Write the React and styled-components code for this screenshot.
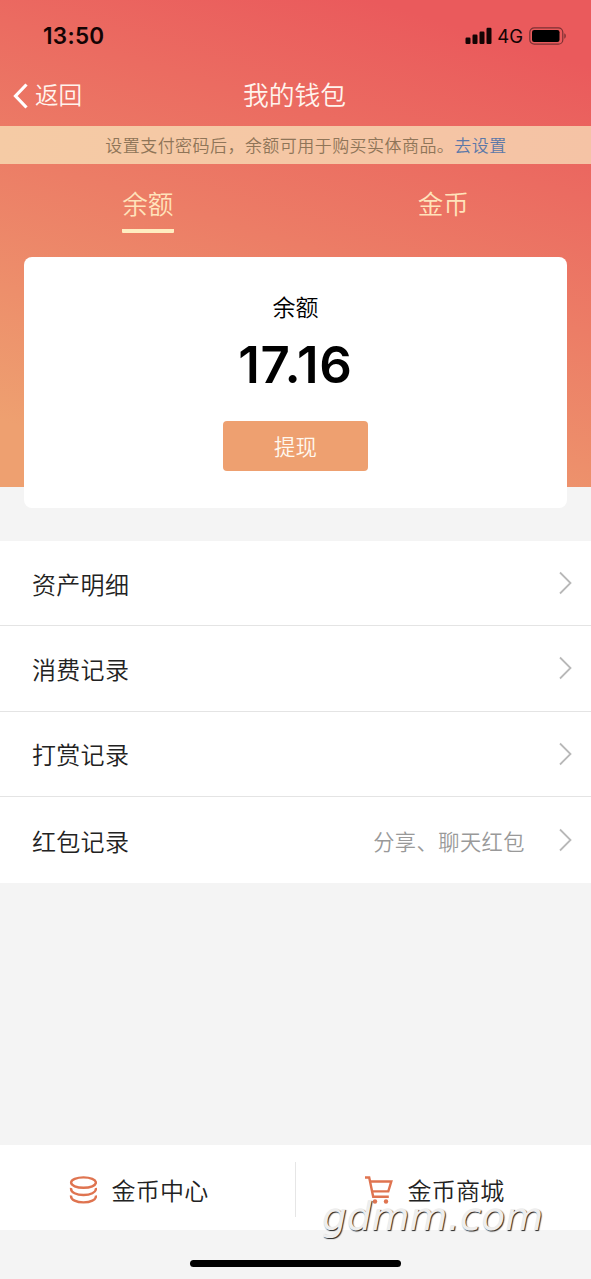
import React from 'react';
import styled, { createGlobalStyle } from 'styled-components';

const GlobalStyle = createGlobalStyle`
  * {
    box-sizing: border-box;
  }
  body {
    margin: 0;
    background: #f4f4f4;
    font-family: Inter, 'Noto Sans CJK SC', sans-serif;
  }
  button {
    font-family: inherit;
    border: none;
    background: none;
    padding: 0;
    cursor: pointer;
  }
`;

const Page = styled.div`
  position: relative;
  display: flex;
  flex-direction: column;
  width: 591px;
  height: 1279px;
  overflow: hidden;
  background: #f4f4f4;
  font-weight: 350;
`;

const Hero = styled.header`
  height: 487px;
  flex: none;
  background: linear-gradient(197deg, #ea5a5c 10%, #eea070 90%);
`;

const StatusBar = styled.div`
  display: flex;
  align-items: center;
  height: 71px;
  padding: 0 24px 0 43px;
  color: #140404;
`;

const Clock = styled.span`
  font-size: 22.5px;
  font-weight: 600;
  letter-spacing: 0.3px;
`;

const StatusIcons = styled.div`
  display: flex;
  align-items: center;
  margin-left: auto;
`;

const Network = styled.span`
  margin: 1px 6px 0 4px;
  font-size: 18.5px;
  font-weight: 400;
  line-height: 22px;
`;

const NavBar = styled.div`
  display: grid;
  grid-template-columns: 1fr auto 1fr;
  align-items: center;
  height: 55px;
  padding: 0 15px 5px 13px;
  color: #fff4ee;
`;

const BackButton = styled.button`
  display: flex;
  align-items: center;
  gap: 7px;
  justify-self: start;
  color: inherit;
  font-size: 23.6px;
  font-weight: 350;
  line-height: 36px;
`;

const Title = styled.h1`
  margin: 0;
  font-size: 25.8px;
  font-weight: 350;
  line-height: 38px;
`;

const Notice = styled.div`
  display: flex;
  justify-content: center;
  align-items: center;
  height: 38px;
  padding: 0 0 2px 21px;
  background: linear-gradient(90deg, #f5cba5, #f5c3a5);
  color: #8f7558;
  font-size: 17px;
  letter-spacing: 0.45px;
  white-space: nowrap;
`;

const NoticeLink = styled.a`
  color: #5c78a8;
`;

const Tabs = styled.div`
  display: grid;
  grid-template-columns: 1fr 1fr;
  padding-top: 22px;
`;

const Tab = styled.button`
  justify-self: center;
  width: 52px;
  height: 47px;
  border-bottom: 4px solid ${({ $active }) => ($active ? '#ffedc0' : 'transparent')};
  border-radius: 1px;
  color: #ffe3bb;
  font-size: 25.6px;
  font-weight: 350;
  line-height: 38px;
  padding-bottom: 5px;
  white-space: nowrap;
`;

const BalanceCard = styled.section`
  display: flex;
  flex-direction: column;
  align-items: center;
  flex: none;
  height: 251px;
  margin: -230px 24px 33px;
  padding-top: 34px;
  border-radius: 8px;
  background: #fff;
  color: #000;
`;

const BalanceLabel = styled.div`
  font-size: 23px;
  line-height: 34px;
`;

const Amount = styled.div`
  margin-top: 10px;
  font-size: 51px;
  font-weight: 600;
  line-height: 60px;
  letter-spacing: 0.8px;
`;

const WithdrawButton = styled.button`
  width: 145px;
  height: 50px;
  margin-top: 26px;
  padding-bottom: 2px;
  border-radius: 4px;
  background: #eea070;
  color: #fff8ef;
  font-size: 21.4px;
  font-weight: 350;
`;

const List = styled.ul`
  flex: none;
  margin: 0;
  padding: 0;
  list-style: none;
  background: #fff;
`;

const ListItem = styled.li`
  display: flex;
  align-items: center;
  height: 85.5px;
  padding: 0 19px 0 32px;
  border-bottom: 1px solid #e4e4e4;
  &:first-child {
    height: 85px;
  }
  &:last-child {
    height: 86px;
    border-bottom: none;
  }
`;

const ItemLabel = styled.span`
  color: #222;
  font-size: 24px;
  letter-spacing: 0.3px;
`;

const ItemNote = styled.span`
  margin-left: auto;
  margin-right: 34px;
  color: #999;
  font-size: 21.2px;
  letter-spacing: 0.5px;
`;

const Arrow = styled.svg`
  margin-left: ${({ $pushed }) => ($pushed ? '0' : 'auto')};
`;

const BottomBar = styled.footer`
  display: flex;
  align-items: center;
  flex: none;
  height: 85px;
  margin-top: auto;
  padding-top: 4px;
  background: #fff;
`;

const BottomLink = styled.button`
  display: flex;
  align-items: center;
  justify-content: center;
  flex: 1;
  height: 55px;
  gap: 14px;
  padding-right: 17px;
  color: #222;
  font-size: 24px;
  font-weight: 350;
  letter-spacing: 0.3px;
  & + & {
    border-left: 1px solid #e6e6e6;
  }
`;

const HomeArea = styled.div`
  display: flex;
  justify-content: center;
  flex: none;
  height: 49px;
  padding-top: 30px;
`;

const HomeIndicator = styled.div`
  width: 211px;
  height: 7px;
  border-radius: 4px;
  background: #000;
`;

const Watermark = styled.div`
  position: absolute;
  left: 322px;
  top: 1189px;
  color: #eee;
  font-family: 'DejaVu Sans', sans-serif;
  font-size: 39px;
  font-style: italic;
  font-weight: 400;
  line-height: 56px;
  text-shadow: 1px 1px 1px #222;
  pointer-events: none;
`;

const SignalIcon = () => (
  <svg width="28" height="18" viewBox="0 0 28 18" fill="currentColor">
    <rect x="0.5" y="10.5" width="5" height="6.5" rx="1.2" />
    <rect x="7.5" y="7.5" width="5" height="9.5" rx="1.2" />
    <rect x="14.5" y="4.5" width="5" height="12.5" rx="1.2" />
    <rect x="21.5" y="0.7" width="5" height="16.3" rx="1.2" />
  </svg>
);

const BatteryIcon = () => (
  <svg width="38" height="18" viewBox="0 0 38 18" fill="none">
    <rect x="0.8" y="0.8" width="33" height="16.4" rx="4.5" stroke="#7c3033" strokeWidth="1.2" />
    <rect x="3" y="3" width="27.5" height="12" rx="2.2" fill="#000" />
    <path d="M35.3 6.3c2 .8 2 4.6 0 5.4z" fill="#7c3033" />
  </svg>
);

const BackIcon = () => (
  <svg width="15" height="26" viewBox="0 0 15 26" fill="none" stroke="#fff" strokeWidth="3.2">
    <path d="M13.5 1.5 2.5 13l11 11.5" />
  </svg>
);

const CoinsIcon = () => (
  <svg width="28" height="28" viewBox="0 0 28 28" fill="none" stroke="#df7450" strokeWidth="2.4">
    <ellipse cx="14.5" cy="6.6" rx="12.4" ry="5.2" />
    <path d="M2.1 12c-1.4 9.4 26.2 9.4 24.8 0" />
    <path d="M2.1 19.5c-1.4 9.2 26.2 9.2 24.8 0" />
  </svg>
);

const CartIcon = () => (
  <svg width="28" height="28" viewBox="0 0 28 28" fill="none" stroke="#df7450" strokeWidth="2.4">
    <path d="M0 1.5h4.2l4 19.3h15.6" />
    <path d="M5 5.5h21.3l-3 9.9H7" />
    <circle cx="10" cy="25.5" r="2.2" fill="#df7450" stroke="none" />
    <circle cx="21" cy="25.5" r="2.2" fill="#df7450" stroke="none" />
  </svg>
);

const records = [
  { label: '资产明细' },
  { label: '消费记录' },
  { label: '打赏记录' },
  { label: '红包记录', note: '分享、聊天红包' },
];

const App = () => (
  <>
    <GlobalStyle />
    <Page>
      <Hero>
        <StatusBar>
          <Clock>13:50</Clock>
          <StatusIcons>
            <SignalIcon />
            <Network>4G</Network>
            <BatteryIcon />
          </StatusIcons>
        </StatusBar>
        <NavBar>
          <BackButton>
            <BackIcon />
            返回
          </BackButton>
          <Title>我的钱包</Title>
        </NavBar>
        <Notice>
          设置支付密码后，余额可用于购买实体商品。
          <NoticeLink>去设置</NoticeLink>
        </Notice>
        <Tabs>
          <Tab $active>余额</Tab>
          <Tab>金币</Tab>
        </Tabs>
      </Hero>
      <BalanceCard>
        <BalanceLabel>余额</BalanceLabel>
        <Amount>17.16</Amount>
        <WithdrawButton>提现</WithdrawButton>
      </BalanceCard>
      <List>
        {records.map(({ label, note }) => (
          <ListItem key={label}>
            <ItemLabel>{label}</ItemLabel>
            {note && <ItemNote>{note}</ItemNote>}
            <Arrow $pushed={!!note} width="13" height="24" viewBox="0 0 13 24" fill="none" stroke="#b8b8b8" strokeWidth="1.8">
              <path d="M1 1.5 11.5 12 1 22.5" />
            </Arrow>
          </ListItem>
        ))}
      </List>
      <BottomBar>
        <BottomLink>
          <CoinsIcon />
          金币中心
        </BottomLink>
        <BottomLink>
          <CartIcon />
          金币商城
        </BottomLink>
      </BottomBar>
      <HomeArea>
        <HomeIndicator />
      </HomeArea>
      <Watermark>gdmm.com</Watermark>
    </Page>
  </>
);

export default App;
